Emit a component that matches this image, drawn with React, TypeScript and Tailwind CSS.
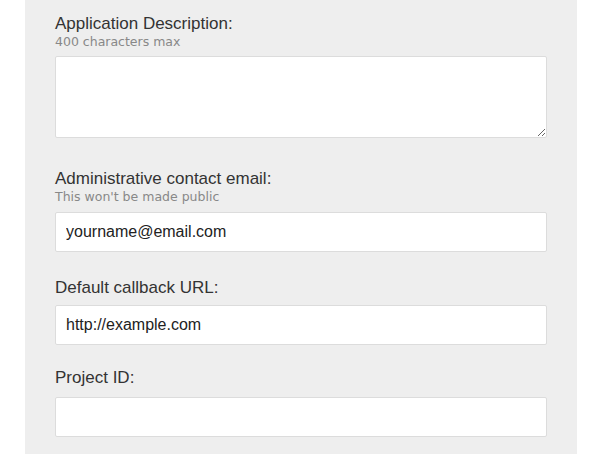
export default function App() {
  const label = "block text-[17px] leading-[20px] text-[#333]";
  const hint = "block text-[12.5px] leading-[15px] text-[#888] font-['DejaVu_Sans',sans-serif]";
  const input =
    "block w-full h-[40px] rounded-[2px] border border-[#dcdcdc] bg-white px-[10px] text-[16px] text-[#222] outline-none font-['Liberation_Sans',Arial,sans-serif]";

  return (
    <div className="w-[600px] h-[454px] bg-white overflow-hidden font-['Liberation_Sans',Arial,sans-serif]">
      <form className="ml-[25px] w-[552px] h-full bg-[#eeeeee] px-[30px] pt-[14px]">
        {/* Description */}
        <div>
          <label className={label}>Application Description:</label>
          <span className={hint}>400 characters max</span>
          <textarea className="mt-[7px] block w-full h-[82px] rounded-[2px] border border-[#dcdcdc] bg-white px-[10px] py-[8px] text-[16px] outline-none" />
        </div>

        {/* Email */}
        <div className="mt-[31px]">
          <label className={label}>Administrative contact email:</label>
          <span className={hint}>This won't be made public</span>
          <input className={`mt-[8px] ${input}`} defaultValue="yourname@email.com" />
        </div>

        {/* Callback */}
        <div className="mt-[26px]">
          <label className={label}>Default callback URL:</label>
          <input className={`mt-[7px] ${input}`} defaultValue="http://example.com" />
        </div>

        {/* Project */}
        <div className="mt-[23px]">
          <label className={label}>Project ID:</label>
          <input className={`mt-[9px] ${input}`} defaultValue="" />
        </div>
      </form>
    </div>
  );
}
